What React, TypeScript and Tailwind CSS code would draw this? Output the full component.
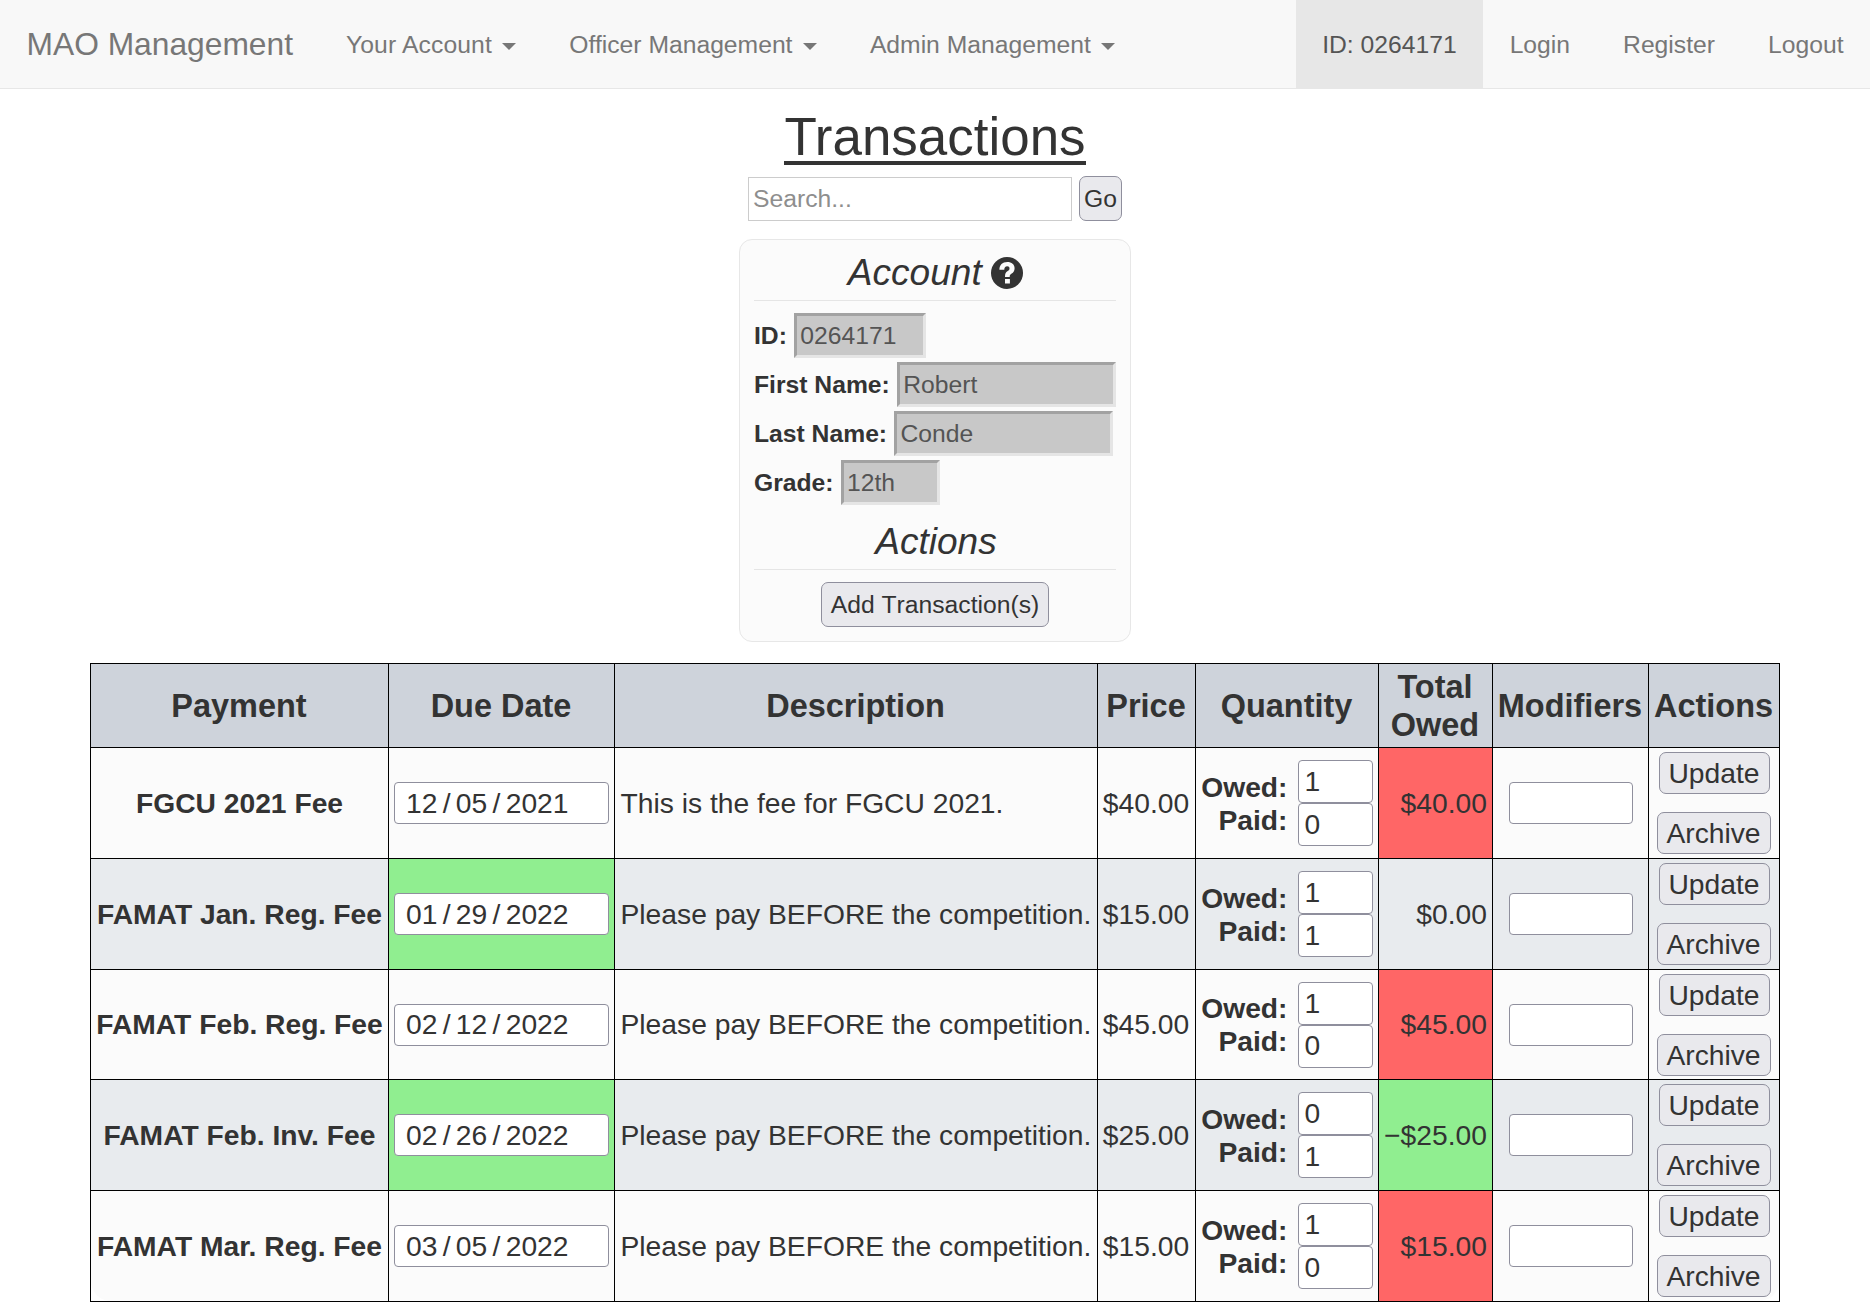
import React from "react";

type Tone = "none" | "red" | "green";

interface Row {
  payment: string;
  date: [string, string, string];
  dateTone: Tone;
  description: string;
  price: string;
  owed: string;
  paid: string;
  total: string;
  totalTone: Tone;
}

const rows: Row[] = [
  { payment: "FGCU 2021 Fee", date: ["12", "05", "2021"], dateTone: "none", description: "This is the fee for FGCU 2021.", price: "$40.00", owed: "1", paid: "0", total: "$40.00", totalTone: "red" },
  { payment: "FAMAT Jan. Reg. Fee", date: ["01", "29", "2022"], dateTone: "green", description: "Please pay BEFORE the competition.", price: "$15.00", owed: "1", paid: "1", total: "$0.00", totalTone: "none" },
  { payment: "FAMAT Feb. Reg. Fee", date: ["02", "12", "2022"], dateTone: "none", description: "Please pay BEFORE the competition.", price: "$45.00", owed: "1", paid: "0", total: "$45.00", totalTone: "red" },
  { payment: "FAMAT Feb. Inv. Fee", date: ["02", "26", "2022"], dateTone: "green", description: "Please pay BEFORE the competition.", price: "$25.00", owed: "0", paid: "1", total: "−$25.00", totalTone: "green" },
  { payment: "FAMAT Mar. Reg. Fee", date: ["03", "05", "2022"], dateTone: "none", description: "Please pay BEFORE the competition.", price: "$15.00", owed: "1", paid: "0", total: "$15.00", totalTone: "red" },
];

const headers = ["Payment", "Due Date", "Description", "Price", "Quantity", "Total Owed", "Modifiers", "Actions"];

const field = "rounded-[4px] border border-[#8f8f9d] bg-white";
const button = "flex items-center justify-center rounded-[7px] border border-[#8f8f9d] bg-[#e9e9ed] whitespace-nowrap";

function toneClass(tone: Tone, base: string) {
  if (tone === "red") return "bg-[#ff6666]";
  if (tone === "green") return "bg-[#90ee90]";
  return base;
}

function NavDropdown({ label, spacing = "" }: { label: string; spacing?: string }) {
  return (
    <a className="flex h-full items-center px-[26.5px] whitespace-nowrap">
      <span className={spacing}>{label}</span>
      <span className="mt-[5px] ml-[10.4px] border-x-[7px] border-t-[7px] border-x-transparent border-t-[#777]" />
    </a>
  );
}

function Navbar() {
  return (
    <nav className="flex h-[89px] items-stretch border-b border-[#e7e7e7] bg-[#f8f8f8] text-[24.7px] leading-[35px] text-[#777]">
      <a className="flex items-center px-[26.5px] text-[31.76px] whitespace-nowrap">MAO Management</a>
      <NavDropdown label="Your Account" spacing="tracking-[0.11px]" />
      <NavDropdown label="Officer Management" />
      <NavDropdown label="Admin Management" />
      <div className="ml-auto flex">
        <a className="flex items-center bg-[#e7e7e7] px-[26.5px] text-[#555]">ID: 0264171</a>
        <a className="flex items-center px-[26.5px]">Login</a>
        <a className="flex items-center px-[26.5px]">Register</a>
        <a className="flex items-center px-[26.5px]">Logout</a>
      </div>
    </nav>
  );
}

function AccountField({ label, value, width }: { label: string; value: string; width: string }) {
  return (
    <div className="flex h-[45px] items-center">
      <span className="mr-[7px] font-bold whitespace-nowrap">{label}</span>
      <span
        className={`flex h-[45px] items-center border-[3px] border-t-[#a2a2a2] border-r-[#e5e5e5] border-b-[#e5e5e5] border-l-[#a2a2a2] bg-[#c8c8c8] pl-[3.4px] text-[#545454] ${width}`}
      >
        {value}
      </span>
    </div>
  );
}

function QuestionIcon() {
  return (
    <svg className="size-8" viewBox="0 0 32 32">
      <circle cx="16" cy="16" r="16" fill="#333" />
      <path
        d="M8.400 12.800C8.400 7.800 11.400 5 16.300 5c4.400 0 7.300 2.400 7.300 6.200 0 2.700-1.200 4.200-2.900 5.300-1.600 1-2 1.500-2 3.500h-4.700c0-3.400.6-4.600 2.700-6 1.300-.9 1.800-1.500 1.800-2.600 0-1.300-.8-2.100-2.300-2.100-1.900 0-2.900 1.300-2.900 3.500zM14 22h4.900v4.500H14z"
        fill="#fbfbfb"
      />
    </svg>
  );
}

function AccountPanel() {
  return (
    <section className="mt-[18px] w-[392px] rounded-[13px] border border-[#e7e7e7] bg-[#fbfbfb] px-[14px] pt-[6px] pb-[14px]">
      <h2 className="flex h-[55px] items-center justify-center gap-[9.4px] border-b border-[#e5e5e5] pl-px text-[37.06px] italic">
        Account
        <QuestionIcon />
      </h2>
      <div className="mt-3 flex flex-col gap-1">
        <AccountField label="ID:" value="0264171" width="w-[132px]" />
        <AccountField label="First Name:" value="Robert" width="w-[219px]" />
        <AccountField label="Last Name:" value="Conde" width="w-[219px]" />
        <AccountField label="Grade:" value="12th" width="w-[99px]" />
      </div>
      <h2 className="mt-[10px] flex h-[55px] items-center justify-center border-b border-[#e5e5e5] pl-[2px] text-[37.06px] italic">
        Actions
      </h2>
      <button className={`mx-auto mt-3 h-[45px] w-[228px] [font-kerning:none] ${button}`}>Add Transaction(s)</button>
    </section>
  );
}

function TableRow({ row, index }: { row: Row; index: number }) {
  const base = index % 2 === 0 ? "bg-[#fbfbfb]" : "bg-[#e8ebee]";
  const last = index === rows.length - 1;
  return (
    <>
      <div className={last ? "bg-white" : base}>
        <div className={`flex h-full items-center justify-center pl-px font-bold whitespace-nowrap ${base} ${last ? "rounded-bl-[20px]" : ""}`}>
          {row.payment}
        </div>
      </div>
      <div className={`flex items-center justify-center ${toneClass(row.dateTone, base)}`}>
        <div className={`flex h-[42px] w-[215px] items-center gap-[5.3px] pl-[11.5px] ${field}`}>
          <span>{row.date[0]}</span>
          <span>/</span>
          <span>{row.date[1]}</span>
          <span>/</span>
          <span>{row.date[2]}</span>
        </div>
      </div>
      <div className={`flex items-center pl-[6px] whitespace-nowrap ${base}`}>{row.description}</div>
      <div className={`flex items-center justify-end pr-[5.3px] ${base}`}>{row.price}</div>
      <div className={`flex items-center justify-end pr-[5px] ${base}`}>
        <div className="mt-px mr-[10px] text-right leading-[33px] font-bold">
          <div>Owed:</div>
          <div>Paid:</div>
        </div>
        <div className="flex w-[75px] flex-col">
          <div className={`flex h-[43px] items-center pl-[6px] ${field}`}>{row.owed}</div>
          <div className={`flex h-[43px] items-center pb-px pl-[6px] ${field}`}>{row.paid}</div>
        </div>
      </div>
      <div className={`flex items-center justify-end pr-[4.6px] ${toneClass(row.totalTone, base)}`}>{row.total}</div>
      <div className={`flex items-center justify-center pl-px ${base}`}>
        <div className={`h-[42px] w-[124px] ${field}`} />
      </div>
      <div className={last ? "bg-white" : base}>
        <div className={`flex h-full flex-col items-center gap-[18px] pt-1 ${base} ${last ? "rounded-br-[20px]" : ""}`}>
          <button className={`ml-px h-[42px] w-[111px] ${button}`}>Update</button>
          <button className={`h-[42px] w-[114px] ${button}`}>Archive</button>
        </div>
      </div>
    </>
  );
}

export default function App() {
  return (
    <div className="h-[1312px] overflow-hidden bg-white font-['Liberation_Sans',Arial,sans-serif] text-[24.7px] text-[#333]">
      <Navbar />
      <main className="flex flex-col items-center">
        <h1 className="mt-[18px] h-[58px] border-b-4 border-[#333] text-[52.94px] leading-[60px]">Transactions</h1>
        <div className="mt-[11px] flex h-[45px] items-end gap-[7px]">
          <div className="flex h-[44px] w-[324px] items-center border border-[#ccc] pl-1 text-[#8e8e8e]">Search...</div>
          <button className={`h-[45px] w-[43px] ${button}`}>Go</button>
        </div>
        <AccountPanel />
        <div className="mt-[21px] mr-px grid w-[1690px] grid-cols-[297px_225px_482px_97px_182px_113px_155px_130px] grid-rows-[83px_110px_110px_109px_110px_110px] gap-px bg-black p-px text-[28.24px]">
          {headers.map((h) => (
            <div key={h} className="flex items-center justify-center bg-[#ced3db] pt-[2px] text-center text-[32.47px] leading-[37.6px] font-bold">
              {h}
            </div>
          ))}
          {rows.map((row, i) => (
            <TableRow key={row.payment} row={row} index={i} />
          ))}
        </div>
      </main>
    </div>
  );
}
